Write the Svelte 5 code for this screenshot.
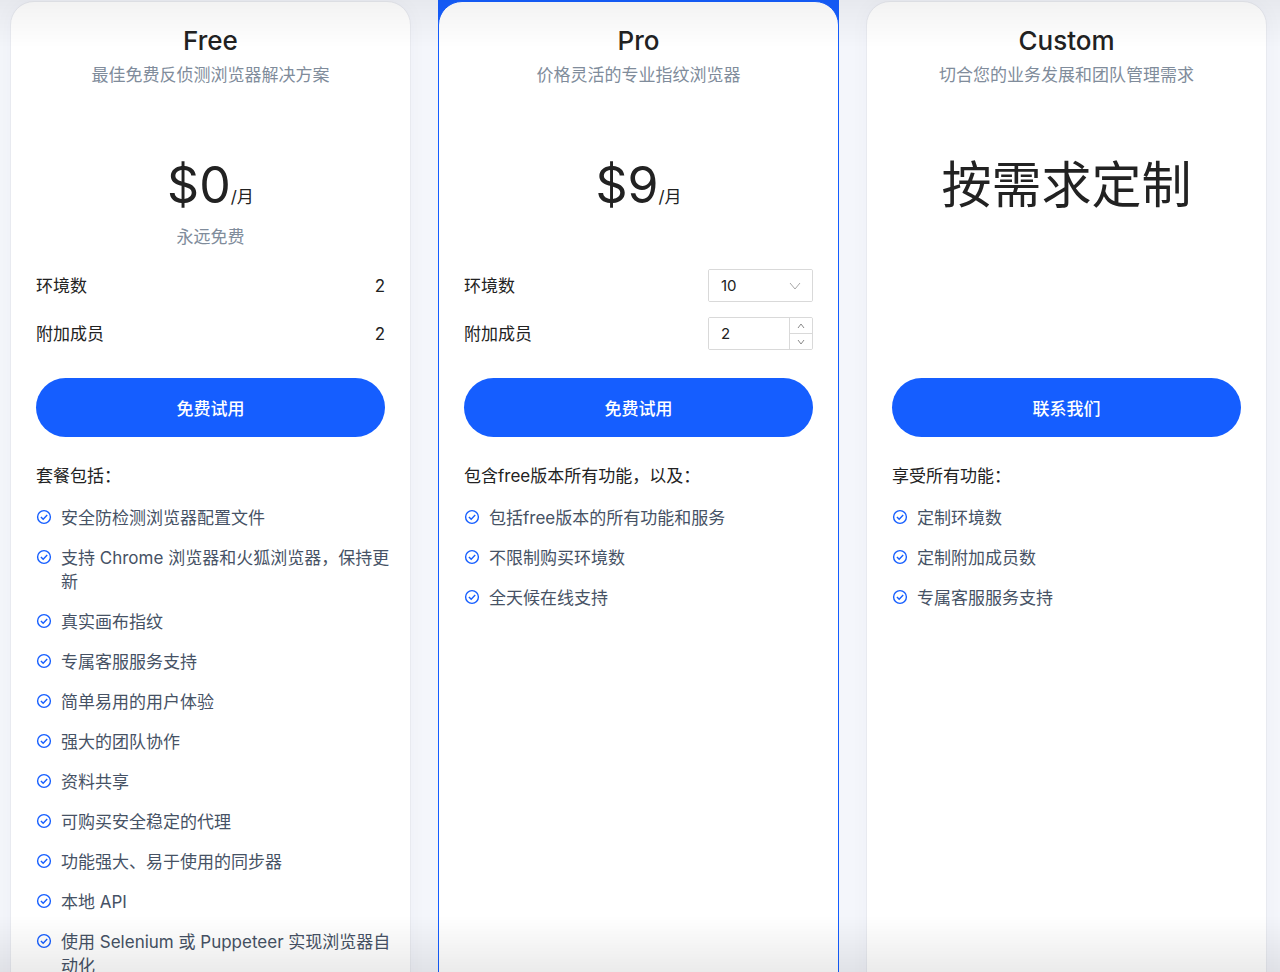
<script lang="ts">
let environments = $state(10);
let members = $state(2);

const environmentOptions = [10, 20, 50, 100, 200];

const freeFeatures = [
	"安全防检测浏览器配置文件",
	"支持 Chrome 浏览器和火狐浏览器，保持更新",
	"真实画布指纹",
	"专属客服服务支持",
	"简单易用的用户体验",
	"强大的团队协作",
	"资料共享",
	"可购买安全稳定的代理",
	"功能强大、易于使用的同步器",
	"本地 API",
	"使用 Selenium 或 Puppeteer 实现浏览器自动化",
];

const plans = [
	{
		id: "free",
		name: "Free",
		summary: "最佳免费反侦测浏览器解决方案",
		price: "$0",
		note: "永远免费",
		action: "免费试用",
		heading: "套餐包括：",
		features: freeFeatures,
	},
	{
		id: "pro",
		name: "Pro",
		summary: "价格灵活的专业指纹浏览器",
		price: "$9",
		note: "",
		action: "免费试用",
		heading: "包含free版本所有功能，以及：",
		features: ["包括free版本的所有功能和服务", "不限制购买环境数", "全天候在线支持"],
	},
	{
		id: "custom",
		name: "Custom",
		summary: "切合您的业务发展和团队管理需求",
		price: "",
		note: "",
		action: "联系我们",
		heading: "享受所有功能：",
		features: ["定制环境数", "定制附加成员数", "专属客服服务支持"],
	},
];

function step(amount: number) {
	members = Math.max(0, members + amount);
}
</script>

<main class="pricing">
	{#each plans as plan}
		<div class="frame" class:featured={plan.id === "pro"}>
			<article class="card">
				<h2 class="name">{plan.name}</h2>
				<p class="summary">{plan.summary}</p>
				<div class="price">
					{#if plan.price}
						<span class="amount">{plan.price}</span><span class="unit">/月</span>
					{:else}
						<span class="amount">按需求定制</span>
					{/if}
				</div>
				<p class="note">{plan.note}</p>

				<div class="options">
					{#if plan.id === "free"}
						<div class="row"><span>环境数</span><span>2</span></div>
						<div class="row"><span>附加成员</span><span>2</span></div>
					{:else if plan.id === "pro"}
						<div class="row">
							<label for="environments">环境数</label>
							<div class="field">
								<select id="environments" bind:value={environments}>
									{#each environmentOptions as option}
										<option value={option}>{option}</option>
									{/each}
								</select>
								<svg class="arrow" viewBox="0 0 12 8" fill="none" stroke="currentColor" aria-hidden="true">
									<path d="M1 1l5 6 5-6" />
								</svg>
							</div>
						</div>
						<div class="row">
							<label for="members">附加成员</label>
							<div class="field">
								<input id="members" type="number" min="0" bind:value={members} />
								<div class="stepper">
									<button type="button" aria-label="+" onclick={() => step(1)}>
										<svg viewBox="0 0 8 6" fill="none" stroke="currentColor"><path d="M1 5l3-4 3 4" /></svg>
									</button>
									<button type="button" aria-label="-" onclick={() => step(-1)}>
										<svg viewBox="0 0 8 6" fill="none" stroke="currentColor"><path d="M1 1l3 4 3-4" /></svg>
									</button>
								</div>
							</div>
						</div>
					{/if}
				</div>

				<button class="action" type="button">{plan.action}</button>

				<h3 class="heading">{plan.heading}</h3>
				<ul class="features">
					{#each plan.features as feature}
						<li>
							<svg class="check" viewBox="0 0 16 16" fill="none" stroke="currentColor" stroke-width="1.4" aria-hidden="true">
								<circle cx="8" cy="8" r="6.4" />
								<path d="M4.9 7.9l2.3 2.3 4-4.1" />
							</svg>
							<span>{feature}</span>
						</li>
					{/each}
				</ul>
			</article>
		</div>
	{/each}
</main>

<style>
	:global(body) {
		background: #f4f6fb;
	}

	.pricing {
		display: grid;
		grid-template-columns: repeat(3, minmax(0, 1fr));
		gap: 27px;
		height: 100vh;
		padding: 0 13px 0 10px;
		box-sizing: border-box;
		overflow: hidden;
		font-family: Inter, "Noto Sans CJK SC", sans-serif;
		font-size: 17px;
		line-height: 24px;
		color: #222;
	}

	/* soft shade at the top and bottom edges of the view */
	.pricing::before,
	.pricing::after {
		content: "";
		position: fixed;
		left: 0;
		right: 0;
		pointer-events: none;
	}

	.pricing::before {
		top: 0;
		height: 48px;
		background: linear-gradient(rgba(0, 0, 0, 0.05), transparent);
	}

	.pricing::after {
		bottom: 0;
		height: 56px;
		background: linear-gradient(transparent, rgba(0, 0, 0, 0.08));
	}

	.frame {
		display: flex;
		padding-top: 1px;
	}

	.card {
		flex: 1;
		min-width: 0;
		padding: 23px 25px;
		border: 1px solid #e8eaf0;
		border-radius: 24px;
		background: #fff;
		box-shadow: 0 0 20px rgba(30, 40, 90, 0.03);
	}

	.featured {
		background: #155eff;
	}

	.featured .card {
		border-color: #155eff;
		box-shadow: none;
	}

	.name {
		margin: 0;
		font-size: 26px;
		font-weight: 500;
		line-height: 32px;
		text-align: center;
	}

	.summary,
	.note {
		margin: 0;
		color: #808c9b;
		text-align: center;
	}

	.summary {
		margin-top: 6px;
	}

	.note {
		height: 24px;
		margin-top: 4px;
	}

	.price {
		height: 72px;
		margin-top: 62px;
		line-height: 72px;
		text-align: center;
		white-space: nowrap;
	}

	.amount {
		font-size: 50px;
	}

	.options {
		display: flex;
		flex-direction: column;
		gap: 15px;
		height: 81px;
		margin-top: 20px;
	}

	.row {
		display: flex;
		justify-content: space-between;
		align-items: center;
		height: 33px;
	}

	.field {
		position: relative;
		display: flex;
		width: 105px;
		height: 33px;
		box-sizing: border-box;
		border: 1px solid #d9d9d9;
		border-radius: 2px;
		overflow: hidden;
	}

	.field select,
	.field input {
		flex: 1;
		min-width: 0;
		padding: 0 12px;
		border: 0;
		background: #fff;
		color: inherit;
		font-family: inherit;
		font-size: 15px;
		appearance: none;
		outline: none;
	}

	.field input {
		appearance: textfield;
	}

	.field input::-webkit-inner-spin-button {
		appearance: none;
		margin: 0;
	}

	.arrow {
		position: absolute;
		top: 12px;
		right: 11px;
		width: 12px;
		height: 8px;
		color: #a6a6a6;
		pointer-events: none;
	}

	.stepper {
		display: flex;
		flex-direction: column;
		width: 22px;
		border-left: 1px solid #d9d9d9;
	}

	.stepper button {
		display: flex;
		flex: 1;
		align-items: center;
		justify-content: center;
		padding: 0;
		border: 0;
		background: #fff;
		color: #888;
		cursor: pointer;
	}

	.stepper button + button {
		border-top: 1px solid #d9d9d9;
	}

	.stepper svg {
		width: 8px;
		height: 6px;
	}

	.action {
		display: block;
		width: 100%;
		height: 59px;
		margin-top: 28px;
		padding: 0;
		border: 0;
		border-radius: 30px;
		background: #155eff;
		color: #fff;
		font-family: inherit;
		font-size: 17px;
		font-weight: 500;
		cursor: pointer;
	}

	.heading {
		margin: 27px 0 0;
		font-size: 17px;
		font-weight: 400;
	}

	.features {
		display: flex;
		flex-direction: column;
		gap: 16px;
		margin: 18px -8px 0 0;
		padding: 0;
		list-style: none;
		color: #465265;
	}

	.features li {
		display: flex;
		gap: 9px;
	}

	.check {
		flex-shrink: 0;
		width: 16px;
		height: 16px;
		margin-top: 3px;
		color: #155eff;
	}
</style>
